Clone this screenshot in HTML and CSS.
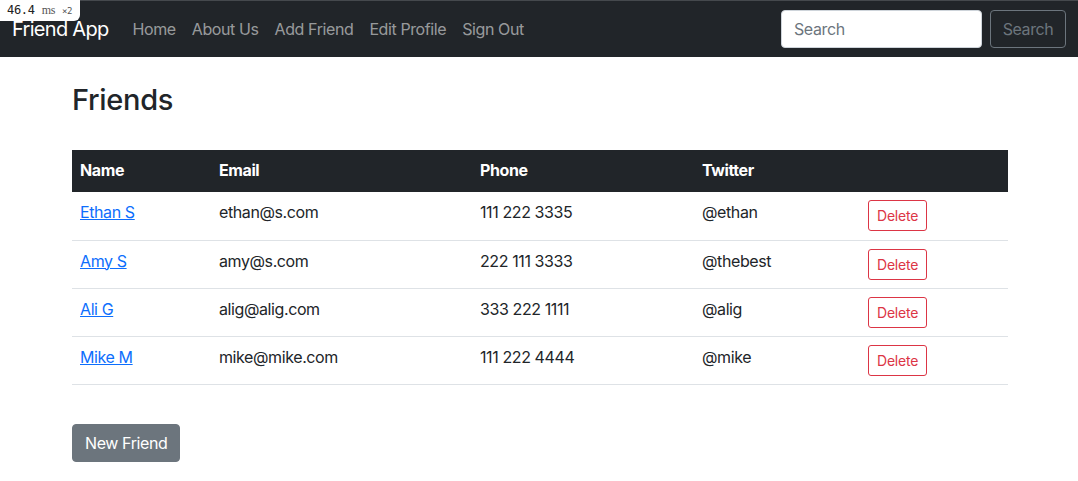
FILE: index.html
```html
<!DOCTYPE html>
<html>
<head>
<meta charset="utf-8">
<link rel="stylesheet" href="styles.css">
</head>
<body>
<div class="perf-badge">46.4 <span class="ms">ms</span> <span class="x">×2</span></div>
<nav class="navbar">
  <a class="brand" href="#">Friend App</a>
  <ul class="nav">
    <li><a href="#">Home</a></li>
    <li><a href="#">About Us</a></li>
    <li><a href="#">Add Friend</a></li>
    <li><a href="#">Edit Profile</a></li>
    <li><a href="#">Sign Out</a></li>
  </ul>
  <form class="search">
    <input class="search-input" type="text" placeholder="Search">
    <button class="search-btn" type="button">Search</button>
  </form>
</nav>
<main class="container">
  <h1 class="title">Friends</h1>
  <table class="table">
    <thead>
      <tr>
        <th class="c1">Name</th>
        <th class="c2">Email</th>
        <th class="c3">Phone</th>
        <th class="c4">Twitter</th>
        <th class="c5"></th>
      </tr>
    </thead>
    <tbody>
      <tr>
        <td><a href="#">Ethan S</a></td>
        <td>ethan@s.com</td>
        <td>111 222 3335</td>
        <td>@ethan</td>
        <td><button class="btn-del" type="button">Delete</button></td>
      </tr>
      <tr>
        <td><a href="#">Amy S</a></td>
        <td>amy@s.com</td>
        <td>222 111 3333</td>
        <td>@thebest</td>
        <td><button class="btn-del" type="button">Delete</button></td>
      </tr>
      <tr>
        <td><a href="#">Ali G</a></td>
        <td>alig@alig.com</td>
        <td>333 222 1111</td>
        <td>@alig</td>
        <td><button class="btn-del" type="button">Delete</button></td>
      </tr>
      <tr>
        <td><a href="#">Mike M</a></td>
        <td>mike@mike.com</td>
        <td>111 222 4444</td>
        <td>@mike</td>
        <td><button class="btn-del" type="button">Delete</button></td>
      </tr>
    </tbody>
  </table>
  <button class="btn-new" type="button">New Friend</button>
</main>
</body>
</html>
```

FILE: styles.css
```css
* { box-sizing: border-box; }
html, body { margin: 0; padding: 0; }
body {
  font-family: Inter, "Helvetica Neue", Arial, sans-serif;
  font-size: 16px;
  line-height: 1.5;
  letter-spacing: -0.4px;
  color: #212529;
  background: #fff;
}
.perf-badge {
  position: absolute;
  left: 0;
  top: 0;
  z-index: 10;
  width: 80px;
  height: 21px;
  background: #fff;
  color: #222;
  font-family: "DejaVu Sans Mono", monospace;
  font-size: 12px;
  letter-spacing: -0.3px;
  line-height: 21px;
  padding: 0 0 0 7px;
  white-space: nowrap;
  border-bottom-right-radius: 6px;
}
.perf-badge .ms { font-family: "Liberation Serif", serif; font-size: 12px; color: #555; }
.perf-badge .x { font-size: 9px; color: #555; }
.navbar {
  display: flex;
  align-items: center;
  height: 57px;
  padding: 0 12px;
  background: #212529;
  border-top: 1px solid #45494d;
}
.brand {
  color: #fff;
  font-size: 20px;
  letter-spacing: -0.7px;
  text-decoration: none;
  margin-right: 16px;
  line-height: 30px;
}
.nav {
  display: flex;
  list-style: none;
  margin: 0;
  padding: 0;
  flex: 1;
}
.nav a {
  display: block;
  padding: 8px;
  color: rgba(255,255,255,.55);
  text-decoration: none;
}
.search { display: flex; align-items: center; gap: 8px; }
.search-input {
  width: 201px;
  height: 38px;
  padding: 6px 12px;
  font: inherit;
  letter-spacing: inherit;
  color: #212529;
  border: 1px solid #ced4da;
  border-radius: 4px;
  background: #fff;
}
.search-input::placeholder { color: #6c757d; }
.search-btn {
  width: 76px;
  height: 38px;
  padding: 6px 0;
  font: inherit;
  letter-spacing: inherit;
  color: #6c757d;
  background: transparent;
  border: 1px solid #6c757d;
  border-radius: 4px;
}
.container {
  width: 960px;
  margin: 0 auto;
  padding: 0 11px 0 13px;
}
.title {
  font-size: 29px;
  font-weight: 500;
  letter-spacing: -0.3px;
  line-height: 1.2;
  margin: 26px 0 0;
  height: 67px;
}
.table {
  width: 100%;
  border-collapse: collapse;
  margin-bottom: 39px;
}
.table th {
  background: #212529;
  color: #fff;
  text-align: left;
  font-weight: 700;
  padding: 8px 8px 10px;
  height: 42px;
  vertical-align: top;
}
.table td {
  padding: 8px;
  height: 48px;
  border-bottom: 1px solid #dee2e6;
  vertical-align: top;
}
.table td a { color: #0d6efd; text-decoration: underline; }
.c1 { width: 139px; }
.c2 { width: 261px; }
.c3 { width: 222px; }
.c4 { width: 166px; }
.c5 { width: 148px; }
.btn-del {
  font: inherit;
  font-size: 14px;
  letter-spacing: -0.2px;
  line-height: 21px;
  padding: 4px 8px;
  color: #dc3545;
  background: transparent;
  border: 1px solid #dc3545;
  border-radius: 3px;
}
.btn-new {
  font: inherit;
  letter-spacing: inherit;
  height: 38px;
  padding: 6px 12px;
  color: #fff;
  background: #6c757d;
  border: 1px solid #6c757d;
  border-radius: 4px;
}
```
